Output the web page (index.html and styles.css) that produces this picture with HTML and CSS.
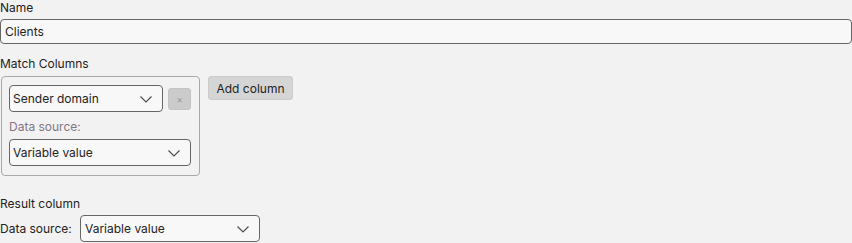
FILE: index.html
```html
<!DOCTYPE html>
<html>
<head>
<meta charset="utf-8">
<link rel="stylesheet" href="styles.css">
</head>
<body>
<div class="page">
  <div class="label">Name</div>
  <input class="text-input" type="text" value="Clients">

  <div class="label section-gap">Match Columns</div>
  <div class="match-row">
    <div class="match-box">
      <div class="col-row">
        <div class="select w-col"><span>Sender domain</span>
          <svg class="chev" width="12" height="7" viewBox="0 0 12 7"><path d="M0.5 0.5 L6 6 L11.5 0.5" fill="none" stroke="#4a4a4a" stroke-width="1.1"/></svg>
        </div>
        <button class="remove-btn" type="button">×</button>
      </div>
      <div class="sub-label">Data source:</div>
      <div class="select w-full"><span>Variable value</span>
        <svg class="chev" width="12" height="7" viewBox="0 0 12 7"><path d="M0.5 0.5 L6 6 L11.5 0.5" fill="none" stroke="#4a4a4a" stroke-width="1.1"/></svg>
      </div>
    </div>
    <button class="add-btn" type="button">Add column</button>
  </div>

  <div class="label result-gap">Result column</div>
  <div class="ds-row">
    <span class="ds-label">Data source:</span>
    <div class="select w-result"><span>Variable value</span>
      <svg class="chev" width="12" height="7" viewBox="0 0 12 7"><path d="M0.5 0.5 L6 6 L11.5 0.5" fill="none" stroke="#4a4a4a" stroke-width="1.1"/></svg>
    </div>
  </div>
</div>
</body>
</html>
```

FILE: styles.css
```css
html, body {
  margin: 0;
  padding: 0;
  background: #f2f2f2;
}
body {
  font-family: Inter, "Noto Sans", sans-serif;
  font-size: 12px;
  color: #222;
}
.page {
  padding: 0 0 0 0;
  display: flex;
  flex-direction: column;
  align-items: flex-start;
}
.label {
  line-height: 16px;
  margin-bottom: 3px;
}
.section-gap {
  margin-top: 12px;
  margin-bottom: 4px;
}
.result-gap {
  margin-top: 20px;
  margin-bottom: 3px;
}
.text-input {
  box-sizing: border-box;
  width: 852px;
  height: 25px;
  margin: 0;
  padding: 0 4px;
  font-family: Inter, "Noto Sans", sans-serif;
  font-size: 12px;
  color: #222;
  background: #f8f8f8;
  border: 1px solid #666;
  border-radius: 4px;
  outline: none;
}
.match-row {
  display: flex;
  align-items: flex-start;
  gap: 8px;
  margin-left: 1px;
}
.match-box {
  box-sizing: border-box;
  width: 199px;
  height: 100px;
  border: 1px solid #a8a8a8;
  border-radius: 4px;
  padding: 8px 8px 0 7px;
}
.col-row {
  display: flex;
  align-items: center;
  gap: 5px;
}
.select {
  box-sizing: border-box;
  height: 27px;
  display: flex;
  align-items: center;
  justify-content: space-between;
  padding: 0 10px 0 3px;
  background: #f8f8f8;
  border: 1px solid #666;
  border-radius: 4px;
  color: #222;
}
.chev {
  display: block;
  margin-top: 1px;
}
.w-col { width: 154px; }
.w-full { width: 182px; }
.w-result { width: 180px; padding-left: 4px; }
.remove-btn {
  box-sizing: border-box;
  width: 23px;
  height: 22px;
  padding: 0;
  margin: 0;
  background: #cbcbcb;
  border: 1px solid #c4c4c4;
  border-radius: 3px;
  color: #9a9a9a;
  font-family: Inter, "Noto Sans", sans-serif;
  font-size: 10px;
  line-height: 20px;
  text-align: center;
}
.sub-label {
  color: #857585;
  line-height: 16px;
  margin-top: 7px;
  margin-bottom: 4px;
}
.add-btn {
  box-sizing: border-box;
  width: 85px;
  height: 24px;
  margin: 0;
  padding: 0;
  background: #d5d5d5;
  border: 1px solid #cacaca;
  border-radius: 3px;
  color: #222;
  font-family: Inter, "Noto Sans", sans-serif;
  font-size: 12px;
}
.ds-row {
  display: flex;
  align-items: center;
  gap: 8px;
}
.ds-label {
  width: 72px;
  line-height: 16px;
}
```
